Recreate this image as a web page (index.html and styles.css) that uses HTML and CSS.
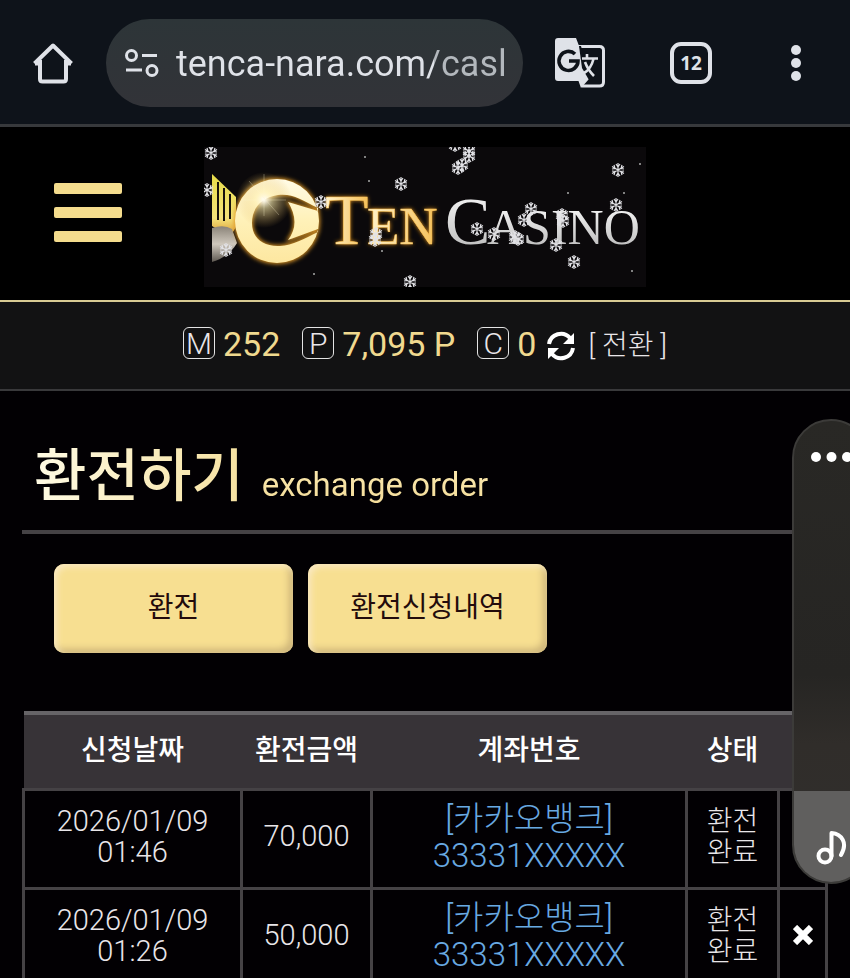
FILE: index.html
```html
<!DOCTYPE html>
<html lang="ko">
<head>
<meta charset="utf-8">
<meta name="viewport" content="width=device-width, initial-scale=1">
<title>환전하기</title>
<link rel="stylesheet" href="styles.css">
</head>
<body>
<div class="browser-bar">
  <button class="bar-button" type="button" aria-label="Home">
    <svg width="42" height="42" viewBox="0 0 42 42" fill="none" stroke="currentColor" stroke-width="4" stroke-linejoin="round"><path d="M2.500 21.500 21 3.500l18.500 18M3 21.500h5M34 21.500h5M8 18v19q0 2.500 2.500 2.500h21q2.500 0 2.500-2.500V18" /></svg>
  </button>
  <div class="address">
    <svg width="36" height="30" viewBox="0 0 36 30" fill="none" stroke="currentColor" stroke-width="3"><circle cx="7.500" cy="7.500" r="5"/><path d="M18 7.500h15M2 22h16"/><circle cx="28" cy="22.500" r="5"/></svg>
    <input class="url" type="text" aria-label="Address" value="tenca-nara.com/casl">
  </div>
  <button class="bar-button translate" type="button" aria-label="Translate">
    <svg width="50" height="50" viewBox="0 0 50 50"><path d="M23 8.500h21.500q4 0 4 4v31.500q0 4-4 4H27" fill="none" stroke="currentColor" stroke-width="3"/><path d="M3 0h18l5 13 8 28-8 9-2.500-7H3q-3 0-3-3V3q0-3 3-3z" fill="currentColor"/><path d="M20 16A9.500 9.500 0 1 0 23 23H14" fill="none" stroke="#0e131a" stroke-width="3.600"/><path d="M24 8h2l9 33-1 1-7-12z" fill="#0e131a"/><path d="M27 20.500h16M32 16v4M38.500 21Q36 31 29 35M30 24q3 8 9 14" fill="none" stroke="currentColor" stroke-width="2.600"/></svg>
  </button>
  <button class="bar-button tabs" type="button" aria-label="12 tabs">12</button>
  <button class="bar-button more" type="button" aria-label="More">
    <svg width="12" height="38" viewBox="0 0 12 38" fill="currentColor"><circle cx="6" cy="6" r="5"/><circle cx="6" cy="19" r="5"/><circle cx="6" cy="32" r="5"/></svg>
  </button>
</div>

<header class="site-header">
  <button class="menu" type="button" aria-label="Menu"><i></i><i></i><i></i></button>
  <a class="logo" href="#" aria-label="Ten Casino">
    <svg width="442" height="140" viewBox="0 0 442 140">
      <defs>
        <linearGradient id="gold" x1="0" y1="0" x2="0" y2="1"><stop offset="0" stop-color="#fffbe6"/><stop offset=".5" stop-color="#fff1b8"/><stop offset="1" stop-color="#fde7a0"/></linearGradient>
        <linearGradient id="wing" x1="0" y1="0" x2="0" y2="1"><stop offset="0" stop-color="#e6dc49"/><stop offset=".7" stop-color="#f4e27a"/><stop offset="1" stop-color="#d9932c"/></linearGradient>
        <linearGradient id="silver" x1="0" y1="0" x2="0" y2="1"><stop offset="0" stop-color="#8a8378"/><stop offset=".5" stop-color="#cfc8bd"/><stop offset="1" stop-color="#5d5750"/></linearGradient>
        <linearGradient id="ten" x1="0" y1="0" x2="1" y2="0"><stop offset="0" stop-color="#fff3cd"/><stop offset="1" stop-color="#f4bf58"/></linearGradient>
        <linearGradient id="casino" x1="0" y1="0" x2="0" y2="1"><stop offset="0" stop-color="#ffffff"/><stop offset="1" stop-color="#b4b4b4"/></linearGradient>
        <radialGradient id="flare"><stop offset="0" stop-color="#ffffff"/><stop offset=".3" stop-color="#fff0b0" stop-opacity=".6"/><stop offset="1" stop-color="#e0b050" stop-opacity="0"/></radialGradient>
        <filter id="glow" x="-20%" y="-30%" width="140%" height="160%"><feGaussianBlur stdDeviation="2"/></filter>
        <path id="ring" fill-rule="evenodd" d="M73 32a42 42 0 1 1 0 84 42 42 0 1 1 0-84zM74 48C56 51 48 62 48 76c0 15 11 24 28 23 13-1 24-7 38-14v-3L84 93q13-17 0-38l30 9V61C98 53 88 46 74 48z"/>
        <g id="flake" stroke="#e2e2e6" stroke-width="1.200" fill="none"><path d="M0-7V7M-6-3.500 6 3.500M-6 3.500 6-3.500M-2-6 0-3 2-6M-2 6 0 3 2 6M-6-1-3-1.500-4-5M6 1 3 1.500 4 5M-6 1-3 1.500-4 5M6-1 3-1.500 4-5"/></g>
      </defs>
      <rect width="442" height="140" fill="#0b090b"/>
      <path d="M8 27 32 50V80L26 90 8 79z" fill="url(#wing)"/>
      <path d="M14 35v38M20 41v33M26 47v25" stroke="#17120c" stroke-width="2"/>
      <path d="M8 81q12-4 20 1l5 14q-8 14-25 19z" fill="url(#silver)"/>
      <use href="#ring" fill="#e29a25" stroke="#e29a25" stroke-width="2" filter="url(#glow)"/>
      <use href="#ring" fill="url(#gold)"/>
      <circle cx="60" cy="53" r="28" fill="url(#flare)"/>
      <path d="M60 27v42M38 53h44M45 34l30 34" stroke="#fff6cf" stroke-opacity=".3" stroke-width="1"/>
      <g class="logo-text">
        <g fill="#f09c20" filter="url(#glow)"><text x="121" y="97" font-size="71">T</text><text x="163" y="97" font-size="53">EN</text></g>
        <g fill="url(#ten)" stroke="#ffc75a" stroke-width=".5"><text x="121" y="97" font-size="71">T</text><text x="163" y="97" font-size="53">EN</text></g>
        <g fill="url(#casino)"><text x="241" y="97" font-size="68">C</text><text x="283" y="97" font-size="50">ASINO</text></g>
      </g>
      <use href="#flake" x="7" y="6"/><use href="#flake" x="3" y="43"/><use href="#flake" x="22" y="103"/>
      <use href="#flake" x="117" y="55"/><use href="#flake" x="172" y="87"/><use href="#flake" x="171" y="93"/><use href="#flake" x="197" y="37"/>
      <use href="#flake" x="206" y="135"/><use href="#flake" x="265" y="9"/><use href="#flake" x="258" y="18"/><use href="#flake" x="254" y="21"/><use href="#flake" x="265" y="4"/><use href="#flake" x="251" y="-2"/>
      <use href="#flake" x="273" y="82"/><use href="#flake" x="290" y="87"/><use href="#flake" x="314" y="92"/><use href="#flake" x="311" y="90"/><use href="#flake" x="320" y="73"/><use href="#flake" x="327" y="62"/>
      <use href="#flake" x="358" y="68"/><use href="#flake" x="359" y="74"/><use href="#flake" x="352" y="98"/><use href="#flake" x="370" y="115"/><use href="#flake" x="414" y="23"/><use href="#flake" x="412" y="58"/>
      <g fill="#aaa"><circle cx="161" cy="10" r="1"/><circle cx="165" cy="34" r="1"/><circle cx="364" cy="46" r="1"/><circle cx="420" cy="46" r="1"/><circle cx="436" cy="17" r="1"/><circle cx="428" cy="124" r="1"/><circle cx="110" cy="127" r="1"/><circle cx="178" cy="104" r="1"/></g>
    </svg>
  </a>
</header>

<section class="balances">
  <span class="badge">M</span><span class="amount">252</span>
  <span class="badge next">P</span><span class="amount">7,095 P</span>
  <span class="badge next">C</span><span class="amount">0</span>
  <button class="convert" type="button">
    <svg width="30" height="30" viewBox="0 0 30 30" fill="none" stroke="currentColor" stroke-width="4"><path d="M3 13A12 12 0 0 1 24 7M27 17A12 12 0 0 1 6 23"/><path d="M28 2v11H17zM2 28V17h11z" fill="currentColor" stroke="none"/></svg>
    <span>[ 전환 ]</span>
  </button>
</section>

<main class="content">
  <h1 class="title"><span class="title-ko">환전하기</span> <span class="title-en">exchange order</span></h1>
  <div class="actions">
    <button class="gold-button" type="button">환전</button>
    <button class="gold-button" type="button">환전신청내역</button>
  </div>
  <table class="orders">
    <colgroup><col class="c-date"><col class="c-amount"><col class="c-account"><col class="c-status"><col class="c-delete"></colgroup>
    <thead>
      <tr><th>신청날짜</th><th>환전금액</th><th>계좌번호</th><th>상태</th><th></th></tr>
    </thead>
    <tbody>
      <tr><td class="num">2026/01/09<br>01:46</td><td class="num">70,000</td><td class="account">[카카오뱅크]<br>33331XXXXX</td><td>환전<br>완료</td><td></td></tr>
      <tr><td class="num">2026/01/09<br>01:26</td><td class="num">50,000</td><td class="account">[카카오뱅크]<br>33331XXXXX</td><td>환전<br>완료</td><td><button class="delete" type="button" aria-label="삭제"><svg width="20" height="20" viewBox="0 0 20 20" stroke="currentColor" stroke-width="6"><path d="M2 2l16 16M18 2 2 18"/></svg></button></td></tr>
    </tbody>
  </table>
  <aside class="edge-panel">
    <button class="edge-more" type="button" aria-label="More"><svg width="44" height="12" viewBox="0 0 44 12" fill="currentColor"><circle cx="6" cy="6" r="5"/><circle cx="21.500" cy="6" r="5"/><circle cx="37" cy="6" r="5"/></svg></button>
    <button class="edge-music" type="button" aria-label="Music"><svg width="32" height="36" viewBox="0 0 32 36" fill="none" stroke="currentColor" stroke-width="4"><circle cx="9" cy="26" r="6.500"/><path d="M15.500 26V3C26 4 32 13 25 25" stroke-linecap="round" stroke-linejoin="round"/></svg></button>
  </aside>
</main>
</body>
</html>
```
FILE: styles.css
```css
* { box-sizing: border-box; }

html { background: #020003; }

body {
  margin: 0;
  overflow-x: hidden;
  color: #e9e6e9;
  font-family: Roboto, "Noto Sans CJK KR", sans-serif;
  font-size: 28px;
  font-weight: 300;
}

button {
  padding: 0;
  border: 0;
  background: none;
  color: inherit;
  font: inherit;
}

svg { display: block; }

.browser-bar {
  display: flex;
  align-items: center;
  height: 127px;
  padding: 2px 48px 0 32px;
  border-bottom: 3px solid #37393c;
  background: #0e131a;
  color: #dfe2e8;
}

.address {
  display: flex;
  flex: 1;
  align-items: center;
  gap: 16px;
  min-width: 0;
  height: 88px;
  margin: 0 32px;
  padding: 0 16px 0 18px;
  border-radius: 44px;
  background: linear-gradient(#2d3538, #323338);
}

.address svg { flex: none; }

.url {
  flex: 1;
  min-width: 0;
  padding: 2px 0 0;
  border: 0;
  outline: 0;
  background: linear-gradient(90deg, #dfe2e8 258px, #b3b8bd 258px);
  background-clip: text;
  color: transparent;
  font: 400 36px/48px Roboto, sans-serif;
}

.tabs {
  width: 42px;
  height: 42px;
  margin: 0 78px 0 65px;
  border: 4px solid;
  border-radius: 11px;
  font: 700 19px/34px "Open Sans", sans-serif;
}

.site-header {
  display: flex;
  align-items: center;
  height: 175px;
  padding: 6px 0 0 54px;
  border-bottom: 2px solid #d8cb93;
  background: #000;
}

.menu {
  display: grid;
  gap: 13px;
  width: 68px;
  margin: 0 82px 8px 0;
}

.menu i {
  height: 11px;
  border-radius: 2px;
  background: #f4dc8d;
}

.logo-text { font-family: "Liberation Serif", serif; }

.balances {
  display: flex;
  align-items: center;
  justify-content: center;
  height: 89px;
  padding-bottom: 6px;
  border-bottom: 2px solid #39393b;
  background: #121213;
}

.badge {
  width: 32px;
  height: 32px;
  margin-right: 8px;
  border: 1px solid #e4e4e4;
  border-radius: 6px;
  font: 300 30px/31px Roboto, sans-serif;
  text-align: center;
}

.next { margin-left: 22px; }

.amount {
  padding-top: 2px;
  color: #f0d98f;
  font-size: 34px;
  font-weight: 400;
}

.convert {
  display: flex;
  align-items: center;
  gap: 12px;
  margin-left: 10px;
}

.convert svg { margin-top: 6px; color: #fff; }

.content {
  position: relative;
  padding: 0 22px;
}

.title {
  display: flex;
  align-items: baseline;
  gap: 18px;
  height: 143px;
  margin: 0;
  padding: 44px 12px 0;
  border-bottom: 4px solid #454245;
  font-weight: 400;
  line-height: 84px;
}

.title-ko, .title-en {
  background: linear-gradient(90deg, #fffbe4, #f6e1a0);
  background-clip: text;
  color: transparent;
}

.title-ko {
  font-size: 57px;
  font-weight: 500;
}

.title-en {
  background-image: linear-gradient(#fff0bd, #efd48c);
  font-size: 33px;
}

.actions {
  display: flex;
  gap: 15px;
  padding: 30px 32px 58px;
}

.gold-button {
  width: 239px;
  height: 89px;
  padding-bottom: 8px;
  border-radius: 10px;
  background: #f7df91;
  box-shadow: inset 3px 3px 6px #fae9c2, inset -4px -4px 7px #cdb478;
  color: #230b0b;
  font-weight: 400;
}

.orders {
  width: 100%;
  border-collapse: collapse;
  table-layout: fixed;
  text-align: center;
}

.c-date { width: 218px; }
.c-amount { width: 130px; }
.c-status { width: 92px; }
.c-delete { width: 48px; }

.orders th {
  height: 76px;
  padding: 0 0 6px;
  border-top: 4px solid #666467;
  border-bottom: 2px solid #454245;
  background: #373337;
  color: #fff;
  font-weight: 500;
}

.orders td {
  height: 99px;
  padding: 0 0 4px;
  border: 3px solid #454245;
  line-height: 31px;
}

.orders .num { font-size: 29px; }

.orders .account {
  color: #68a9e2;
  font-size: 33px;
  line-height: 37px;
}

.delete { color: #fff; }
.delete svg { margin: 0 auto; }

.edge-panel {
  position: absolute;
  top: 28px;
  right: -20px;
  width: 78px;
  height: 465px;
  overflow: hidden;
  border: 2px solid #3c3b39;
  border-radius: 39px;
  background: linear-gradient(#292825, #262523 55%, #302d2a 70%, #302f2d);
  color: #fff;
}

.edge-more {
  display: block;
  height: 370px;
  padding: 30px 0 0 16px;
}

.edge-more svg { margin-bottom: 328px; }

.edge-music {
  display: block;
  width: 100%;
  height: 91px;
  padding: 22px 0 0 22px;
  background: #605f5e;
}
```
